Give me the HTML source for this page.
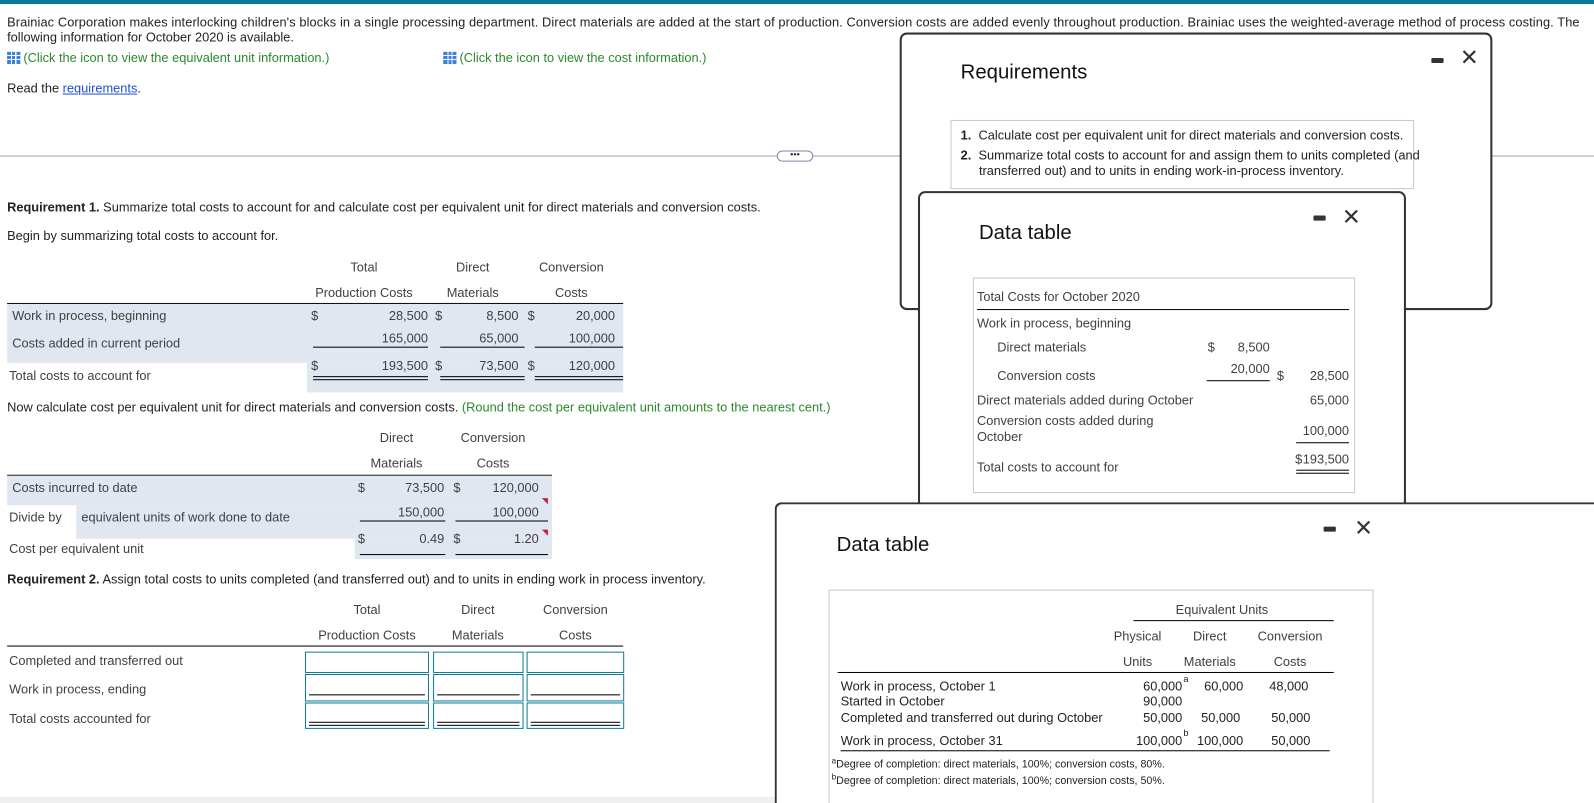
<!DOCTYPE html>
<html><head><meta charset="utf-8"><style>
*{margin:0;padding:0;box-sizing:border-box}
html,body{overflow:hidden}
body{width:1594px;height:803px;position:relative;background:#fff;font-family:"Liberation Sans",Arial,sans-serif;font-size:12.6px;color:#222}
#w{position:absolute;left:0;top:0;width:1568px;height:790px;overflow:hidden;transform:scale(1.0166);transform-origin:0 0}
.a{position:absolute;white-space:nowrap;line-height:14px}
.r{text-align:right}
.c{text-align:center}
.g{color:#404040}
.sh{position:absolute;background:#e1e7f0}
.ln{position:absolute;height:1px;background:#000}
.in{position:absolute;border:1px solid #0a7e99;background:#fff}
.modal{position:absolute;border:2px solid #333;border-radius:7px;background:#fff}
.ttl{position:absolute;font-size:20px;color:#111}
.mn{position:absolute;width:12px;height:5px;background:#333;border-radius:1px}
.x{position:absolute;font-size:22px;line-height:22px;color:#333}
.box{position:absolute;border:1px solid #c8c8c8;background:#fff}
.icon{display:inline-block;width:13px;height:12px;background:#3b82d6;vertical-align:-2px;margin-right:3px;background-image:linear-gradient(90deg,transparent 4px,#fff 4px,#fff 5px,transparent 5px,transparent 8px,#fff 8px,#fff 9px,transparent 9px),linear-gradient(transparent 3px,#fff 3px,#fff 4px,transparent 4px,transparent 7px,#fff 7px,#fff 8px,transparent 8px)}
.sp{position:absolute;font-size:9px;line-height:9px}
</style></head><body>
<div id="w">
<div style="position:absolute;left:0;top:0;width:1568px;height:4px;background:#0a7796"></div>
<div style="position:absolute;left:0;top:153px;width:1568px;height:1px;background:#9aa3b5"></div>
<div style="position:absolute;left:0;top:784px;width:1568px;height:6px;background:#f0f0f0"></div>
<div class="a" style="left:7px;top:15px;letter-spacing:0.1px">Brainiac Corporation makes interlocking children's blocks in a single processing department. Direct materials are added at the start of production. Conversion costs are added evenly throughout production. Brainiac uses the weighted-average method of process costing. The</div>
<div class="a" style="left:7px;top:30px">following information for October 2020 is available.</div>
<div class="a" style="left:7px;top:50px;color:#2a8a2a"><span class="icon"></span>(Click the icon to view the equivalent unit information.)</div>
<div class="a" style="left:436px;top:50px;color:#2a8a2a"><span class="icon"></span>(Click the icon to view the cost information.)</div>
<div class="a" style="left:7px;top:80px">Read the <span style="color:#1a4fd6;text-decoration:underline">requirements</span>.</div>
<div style="position:absolute;left:764px;top:148px;width:36px;height:11px;border:1px solid #7a8aa8;border-radius:6px;background:#fff;font-size:9px;line-height:7px;text-align:center;color:#333">•••</div>

<div class="a" style="left:7px;top:197px"><b>Requirement 1.</b> Summarize total costs to account for and calculate cost per equivalent unit for direct materials and conversion costs.</div>
<div class="a" style="left:7px;top:225px">Begin by summarizing total costs to account for.</div>

<div class="a c g" style="left:300px;width:116px;top:256px">Total</div>
<div class="a c g" style="left:300px;width:116px;top:281px">Production Costs</div>
<div class="a c g" style="left:430px;width:70px;top:256px">Direct</div>
<div class="a c g" style="left:430px;width:70px;top:281px">Materials</div>
<div class="a c g" style="left:522px;width:80px;top:256px">Conversion</div>
<div class="a c g" style="left:522px;width:80px;top:281px">Costs</div>
<div class="ln" style="left:7px;top:298px;width:606px"></div>
<div class="sh" style="left:7px;top:299px;width:606px;height:58px"></div>
<div class="sh" style="left:302px;top:357px;width:311px;height:29px"></div>
<div class="a g" style="left:12px;top:304px">Work in process, beginning</div>
<div class="a g" style="left:12px;top:331px">Costs added in current period</div>
<div class="a g" style="left:9px;top:363px">Total costs to account for</div>
<div class="a g" style="left:306px;top:304px">$</div><div class="a r g" style="left:340px;width:81px;top:304px">28,500</div>
<div class="a g" style="left:428px;top:304px">$</div><div class="a r g" style="left:440px;width:70px;top:304px">8,500</div>
<div class="a g" style="left:519px;top:304px">$</div><div class="a r g" style="left:530px;width:75px;top:304px">20,000</div>
<div class="a r g" style="left:340px;width:81px;top:326px">165,000</div>
<div class="a r g" style="left:440px;width:70px;top:326px">65,000</div>
<div class="a r g" style="left:530px;width:75px;top:326px">100,000</div>
<div class="ln" style="left:308px;top:341px;width:113px"></div>
<div class="ln" style="left:433px;top:341px;width:83px"></div>
<div class="ln" style="left:526px;top:341px;width:87px"></div>
<div class="a g" style="left:306px;top:353px">$</div><div class="a r g" style="left:340px;width:81px;top:353px">193,500</div>
<div class="a g" style="left:428px;top:353px">$</div><div class="a r g" style="left:440px;width:70px;top:353px">73,500</div>
<div class="a g" style="left:519px;top:353px">$</div><div class="a r g" style="left:530px;width:75px;top:353px">120,000</div>
<div style="position:absolute;left:308px;top:370px;width:113px;height:4px;border-top:1px solid #000;border-bottom:1px solid #000"></div>
<div style="position:absolute;left:433px;top:370px;width:83px;height:4px;border-top:1px solid #000;border-bottom:1px solid #000"></div>
<div style="position:absolute;left:526px;top:370px;width:87px;height:4px;border-top:1px solid #000;border-bottom:1px solid #000"></div>

<div class="a" style="left:7px;top:394px">Now calculate cost per equivalent unit for direct materials and conversion costs. <span style="color:#2a8a2a">(Round the cost per equivalent unit amounts to the nearest cent.)</span></div>

<div class="a c g" style="left:355px;width:70px;top:424px">Direct</div>
<div class="a c g" style="left:355px;width:70px;top:449px">Materials</div>
<div class="a c g" style="left:445px;width:80px;top:424px">Conversion</div>
<div class="a c g" style="left:445px;width:80px;top:449px">Costs</div>
<div class="ln" style="left:7px;top:467px;width:536px"></div>
<div class="sh" style="left:7px;top:468px;width:536px;height:29px"></div>
<div class="sh" style="left:75px;top:497px;width:468px;height:33px"></div>
<div class="sh" style="left:349px;top:530px;width:194px;height:20px"></div>
<div class="a g" style="left:12px;top:473px">Costs incurred to date</div>
<div class="a g" style="left:9px;top:502px">Divide by</div>
<div class="a g" style="left:80px;top:502px">equivalent units of work done to date</div>
<div class="a g" style="left:9px;top:533px">Cost per equivalent unit</div>
<div class="a g" style="left:352px;top:473px">$</div><div class="a r g" style="left:370px;width:67px;top:473px">73,500</div>
<div class="a g" style="left:446px;top:473px">$</div><div class="a r g" style="left:460px;width:70px;top:473px">120,000</div>
<div class="a r g" style="left:370px;width:67px;top:497px">150,000</div>
<div class="a r g" style="left:460px;width:70px;top:497px">100,000</div>
<div class="ln" style="left:354px;top:512px;width:84px"></div>
<div class="ln" style="left:448px;top:512px;width:91px"></div>
<div class="a g" style="left:352px;top:523px">$</div><div class="a r g" style="left:370px;width:67px;top:523px">0.49</div>
<div class="a g" style="left:446px;top:523px">$</div><div class="a r g" style="left:460px;width:70px;top:523px">1.20</div>
<div class="ln" style="left:354px;top:545px;width:84px"></div>
<div class="ln" style="left:448px;top:545px;width:91px"></div>
<div style="position:absolute;left:533px;top:490px;border-left:6px solid transparent;border-top:6px solid #c0203a"></div>
<div style="position:absolute;left:533px;top:521px;border-left:6px solid transparent;border-top:6px solid #c0203a"></div>

<div class="a" style="left:7px;top:563px"><b>Requirement 2.</b> Assign total costs to units completed (and transferred out) and to units in ending work in process inventory.</div>
<div class="a c g" style="left:300px;width:122px;top:593px">Total</div>
<div class="a c g" style="left:300px;width:122px;top:618px">Production Costs</div>
<div class="a c g" style="left:426px;width:88px;top:593px">Direct</div>
<div class="a c g" style="left:426px;width:88px;top:618px">Materials</div>
<div class="a c g" style="left:518px;width:96px;top:593px">Conversion</div>
<div class="a c g" style="left:518px;width:96px;top:618px">Costs</div>
<div class="ln" style="left:7px;top:635px;width:606px"></div>
<div class="a g" style="left:9px;top:643px">Completed and transferred out</div>
<div class="a g" style="left:9px;top:671px">Work in process, ending</div>
<div class="a g" style="left:9px;top:700px">Total costs accounted for</div>
<div class="in" style="left:300px;top:641px;width:122px;height:21px"></div>
<div class="in" style="left:426px;top:641px;width:89px;height:21px"></div>
<div class="in" style="left:518px;top:641px;width:96px;height:21px"></div>
<div class="in" style="left:300px;top:663px;width:122px;height:27px"><div class="ln" style="left:3px;top:19px;width:114px"></div></div>
<div class="in" style="left:426px;top:663px;width:89px;height:27px"><div class="ln" style="left:3px;top:19px;width:81px"></div></div>
<div class="in" style="left:518px;top:663px;width:96px;height:27px"><div class="ln" style="left:3px;top:19px;width:88px"></div></div>
<div class="in" style="left:300px;top:691px;width:122px;height:26px"><div style="position:absolute;left:3px;top:18px;width:114px;height:4px;border-top:1px solid #000;border-bottom:1px solid #000"></div></div>
<div class="in" style="left:426px;top:691px;width:89px;height:26px"><div style="position:absolute;left:3px;top:18px;width:81px;height:4px;border-top:1px solid #000;border-bottom:1px solid #000"></div></div>
<div class="in" style="left:518px;top:691px;width:96px;height:26px"><div style="position:absolute;left:3px;top:18px;width:88px;height:4px;border-top:1px solid #000;border-bottom:1px solid #000"></div></div>

<!-- modal 1 -->
<div class="modal" style="left:885px;top:32px;width:583px;height:273px">
  <div class="ttl" style="left:58px;top:26px">Requirements</div>
  <div class="mn" style="left:521px;top:23px"></div>
  <div class="x" style="left:549px;top:12px">✕</div>
  <div class="box" style="left:48px;top:84px;width:456px;height:68px">
    <div class="a" style="left:9px;top:7px"><b>1.</b>&nbsp; Calculate cost per equivalent unit for direct materials and conversion costs.</div>
    <div class="a" style="left:9px;top:27px"><b>2.</b>&nbsp; Summarize total costs to account for and assign them to units completed (and</div>
    <div class="a" style="left:27px;top:42px">transferred out) and to units in ending work-in-process inventory.</div>
  </div>
</div>

<!-- modal 2 -->
<div class="modal" style="left:903px;top:188px;width:480px;height:410px">
  <div class="ttl" style="left:58px;top:28px">Data table</div>
  <div class="mn" style="left:387px;top:22px"></div>
  <div class="x" style="left:415px;top:13px">✕</div>
  <div class="box" style="left:52px;top:83px;width:376px;height:212px">
    <div class="a g" style="left:3px;top:11px">Total Costs for October 2020</div>
    <div class="ln" style="left:3px;top:30px;width:366px"></div>
    <div class="a g" style="left:3px;top:37px">Work in process, beginning</div>
    <div class="a g" style="left:23px;top:61px">Direct materials</div>
    <div class="a g" style="left:230px;top:61px">$</div><div class="a r g" style="left:240px;width:51px;top:61px">8,500</div>
    <div class="a g" style="left:23px;top:89px">Conversion costs</div>
    <div class="a r g" style="left:230px;width:61px;top:82px">20,000</div>
    <div class="ln" style="left:229px;top:100px;width:62px"></div>
    <div class="a g" style="left:298px;top:89px">$</div><div class="a r g" style="left:310px;width:59px;top:89px">28,500</div>
    <div class="a g" style="left:3px;top:113px">Direct materials added during October</div>
    <div class="a r g" style="left:310px;width:59px;top:113px">65,000</div>
    <div class="a g" style="left:3px;top:133px">Conversion costs added during</div>
    <div class="a g" style="left:3px;top:149px">October</div>
    <div class="a r g" style="left:310px;width:59px;top:143px">100,000</div>
    <div class="ln" style="left:317px;top:161px;width:52px"></div>
    <div class="a g" style="left:3px;top:179px">Total costs to account for</div>
    <div class="a g" style="left:316px;top:171px">$</div><div class="a r g" style="left:310px;width:59px;top:171px">193,500</div>
    <div style="position:absolute;left:317px;top:188px;width:52px;height:4px;border-top:1px solid #000;border-bottom:1px solid #000"></div>
  </div>
</div>

<!-- modal 3 -->
<div class="modal" style="left:762px;top:494px;width:806px;height:296px;border-right:none;border-bottom:none;border-radius:7px 0 0 0">
  <div class="ttl" style="left:59px;top:29px">Data table</div>
  <div class="mn" style="left:538px;top:22px"></div>
  <div class="x" style="left:568px;top:13px">✕</div>
  <div class="box" style="left:51px;top:84px;width:536px;height:212px">
    <div class="a c g" style="left:288px;width:196px;top:12px">Equivalent Units</div>
    <div class="ln" style="left:299px;top:29px;width:197px"></div>
    <div class="a c g" style="left:270px;width:66px;top:38px">Physical</div>
    <div class="a c g" style="left:270px;width:66px;top:63px">Units</div>
    <div class="a c g" style="left:340px;width:68px;top:38px">Direct</div>
    <div class="a c g" style="left:340px;width:68px;top:63px">Materials</div>
    <div class="a c g" style="left:414px;width:78px;top:38px">Conversion</div>
    <div class="a c g" style="left:414px;width:78px;top:63px">Costs</div>
    <div class="ln" style="left:8px;top:80px;width:488px"></div>
    <div class="a" style="left:11px;top:87px">Work in process, October 1</div>
    <div class="a" style="left:11px;top:102px">Started in October</div>
    <div class="a" style="left:11px;top:118px">Completed and transferred out during October</div>
    <div class="a" style="left:11px;top:141px">Work in process, October 31</div>
    <div class="a r" style="left:280px;width:67px;top:87px">60,000</div><div class="sp" style="left:348px;top:83px">a</div>
    <div class="a r" style="left:280px;width:67px;top:102px">90,000</div>
    <div class="a r" style="left:280px;width:67px;top:118px">50,000</div>
    <div class="a r" style="left:280px;width:67px;top:141px">100,000</div><div class="sp" style="left:348px;top:136px">b</div>
    <div class="a r" style="left:340px;width:67px;top:87px">60,000</div>
    <div class="a r" style="left:340px;width:64px;top:118px">50,000</div>
    <div class="a r" style="left:340px;width:67px;top:141px">100,000</div>
    <div class="a r" style="left:400px;width:71px;top:87px">48,000</div>
    <div class="a r" style="left:400px;width:73px;top:118px">50,000</div>
    <div class="a r" style="left:400px;width:73px;top:141px">50,000</div>
    <div class="ln" style="left:11px;top:157px;width:481px"></div>
    <div class="a" style="left:2px;top:161px;font-size:10.5px"><span style="font-size:8px;vertical-align:4px">a</span>Degree of completion: direct materials, 100%; conversion costs, 80%.</div>
    <div class="a" style="left:2px;top:177px;font-size:10.5px"><span style="font-size:8px;vertical-align:4px">b</span>Degree of completion: direct materials, 100%; conversion costs, 50%.</div>
  </div>
</div>
</div>
</body></html>
